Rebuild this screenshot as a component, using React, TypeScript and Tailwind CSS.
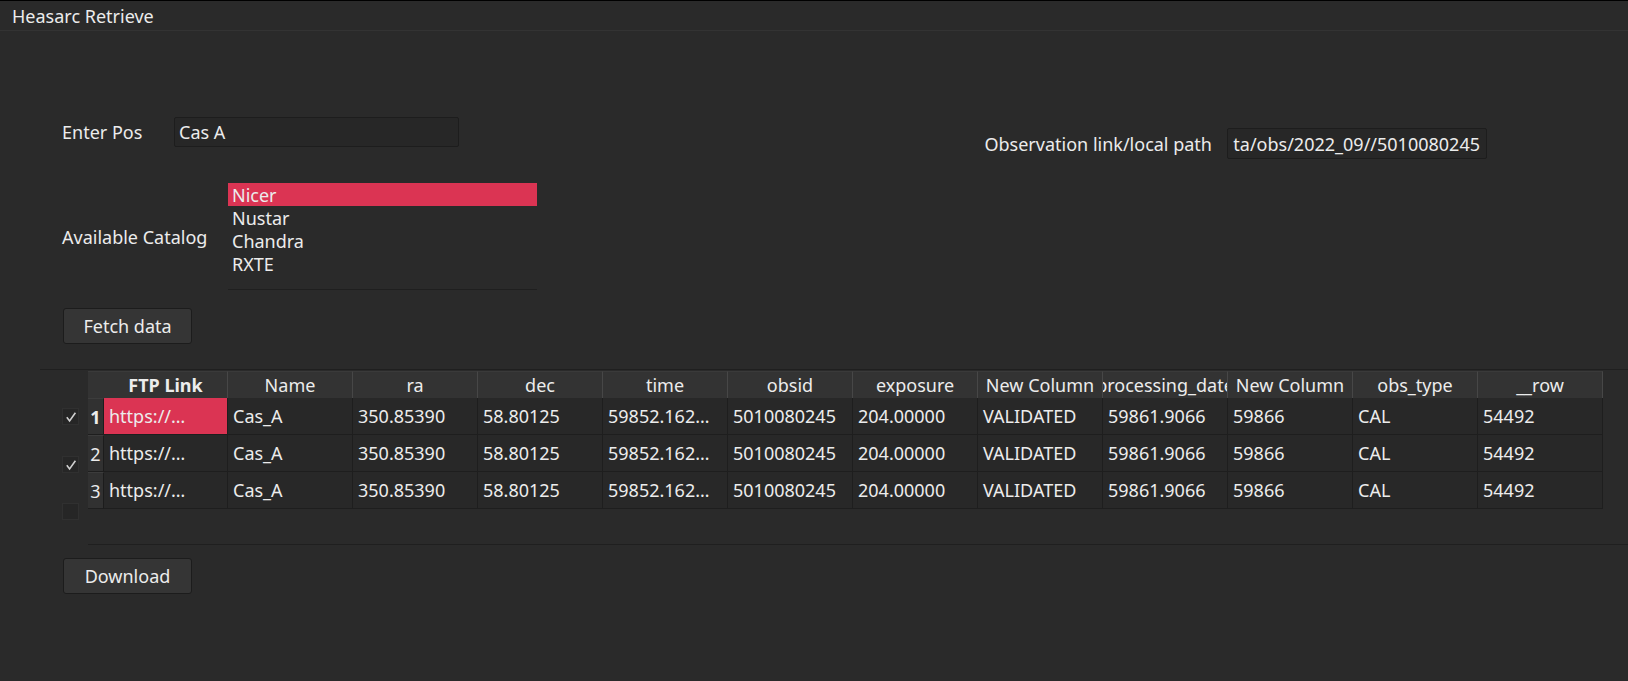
import React from "react";

const cols = [
  "FTP Link",
  "Name",
  "ra",
  "dec",
  "time",
  "obsid",
  "exposure",
  "New Column",
  "processing_date",
  "New Column",
  "obs_type",
  "__row",
];

const rowData = [
  "https://…",
  "Cas_A",
  "350.85390",
  "58.80125",
  "59852.162…",
  "5010080245",
  "204.00000",
  "VALIDATED",
  "59861.9066",
  "59866",
  "CAL",
  "54492",
];

function Check({ checked }: { checked: boolean }) {
  return (
    <div className="w-[17px] h-[17px] bg-[#262626] border border-[#303030] flex items-center justify-center">
      {checked && (
        <svg width="12" height="12" viewBox="0 0 12 12">
          <path d="M1.8 6.2 L4.6 10 L10.4 1.8" fill="none" stroke="#d0d0d0" strokeWidth="1.6" />
        </svg>
      )}
    </div>
  );
}

function Button({ label }: { label: string }) {
  return (
    <div className="ml-[1px] w-[129px] h-[36px] rounded-[3px] border border-[#1c1c1c] bg-[#353535] flex items-center justify-center">
      {label}
    </div>
  );
}

export default function App() {
  return (
    <div className="w-[1628px] h-[681px] overflow-hidden bg-[#2a2a2a] text-[#ececec] text-[18px] leading-none flex flex-col font-['Noto_Sans',sans-serif]">
      <div className="h-[31px] shrink-0 border-t border-t-black border-b border-b-[#333333] flex items-center pl-[12px]">
        Heasarc Retrieve
      </div>

      <div className="flex flex-col pl-[62px]">
        {/* Row 1 */}
        <div className="flex h-[30px] mt-[86px]">
          <div className="flex items-center h-[30px]">
            <span className="w-[112px]">Enter Pos</span>
            <div className="w-[285px] h-[30px] bg-[#272727] border border-[#1d1d1d] rounded-[2px] flex items-center pl-[4px]">
              Cas A
            </div>
          </div>
          <div className="ml-auto mr-[141px] mt-[11px] flex items-center h-[31px]">
            <span className="mr-[15px] whitespace-nowrap">Observation link/local path</span>
            <div className="w-[260px] h-[31px] bg-[#272727] border border-[#1d1d1d] rounded-[2px] flex items-center justify-end pr-[6px] overflow-hidden whitespace-nowrap">
              <span className="shrink-0">ta/obs/2022_09//5010080245</span>
            </div>
          </div>
        </div>

        {/* Catalog */}
        <div className="flex items-center mt-[36px]">
          <span className="w-[166px]">Available Catalog</span>
          <div className="w-[309px] h-[107px] border-b border-[#1f1f1f] flex flex-col">
            <div className="h-[23px] bg-[#db3453] flex items-center pl-[4px]">Nicer</div>
            <div className="h-[23px] flex items-center pl-[4px]">Nustar</div>
            <div className="h-[23px] flex items-center pl-[4px]">Chandra</div>
            <div className="h-[23px] flex items-center pl-[4px]">RXTE</div>
          </div>
        </div>

        <div className="mt-[18px]">
          <Button label="Fetch data" />
        </div>

        {/* Table section */}
        <div className="mt-[25px] -ml-[22px] pl-[22px] flex border-t border-[#1f1f1f]">
          <div className="w-[26px] flex flex-col">
            <div className="mt-[38px]">
              <Check checked />
            </div>
            <div className="mt-[31px]">
              <Check checked />
            </div>
            <div className="mt-[30px]">
              <Check checked={false} />
            </div>
          </div>
          <div className="flex-1 h-[175px] border-b border-[#1f1f1f] pt-[1px] flex flex-col">
            <div className="flex h-[27px]">
              <div className="w-[16px] bg-[#333333] border-t border-[#3a3a3a]" />
              {cols.map((c, i) => (
                <div
                  key={i}
                  className={`${i === 0 ? "w-[124px] font-bold" : "w-[125px]"} bg-[#333333] border-t border-[#3a3a3a] border-r border-r-[#474747] flex items-center justify-center overflow-hidden whitespace-nowrap`}
                >
                  <span className="shrink-0">{c}</span>
                </div>
              ))}
            </div>
            {[1, 2, 3].map((n) => (
              <div key={n} className="flex h-[37px]">
                <div
                  className={`w-[16px] bg-[#313131] border-r border-[#1c1c1c] border-b border-b-[#1e1e1e] border-t border-t-[#3c3c3c] flex items-center justify-center ${n === 1 ? "font-bold" : ""}`}
                >
                  {n}
                </div>
                {rowData.map((v, i) => (
                  <div
                    key={i}
                    className={`${i === 0 ? "w-[124px]" : "w-[125px]"} ${n === 1 && i === 0 ? "bg-[#db3453]" : "bg-[#282828]"} border-r border-b border-[#1e1e1e] flex items-center pl-[5px] overflow-hidden whitespace-nowrap`}
                  >
                    {v}
                  </div>
                ))}
              </div>
            ))}
          </div>
        </div>

        <div className="mt-[13px]">
          <Button label="Download" />
        </div>
      </div>
    </div>
  );
}
